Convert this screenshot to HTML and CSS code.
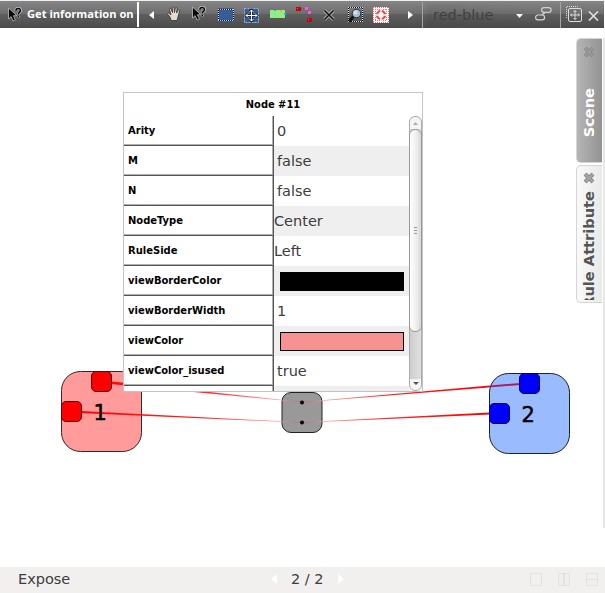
FILE: index.html
```html
<!DOCTYPE html>
<html lang="en">
<head>
<meta charset="utf-8">
<title>Node view</title>
<link rel="stylesheet" href="styles.css">
</head>
<body>
<svg width="0" height="0" class="defs">
  <defs>
    <symbol id="pointer" viewBox="0 0 16 16">
      <path d="M1.5 1v11l2.6-2.4 2 4.4 2.3-1.1-2-4.2h3.5z" fill="#050505" stroke="#bdbdbd" stroke-width=".8"/>
      <path d="M8.7 3.7C8.7.3 14 .4 13.7 3.6c0 1.8-2.3 1.8-2.3 3.8M11.4 8.7v1.7" fill="none" stroke="#b8b8b8" stroke-width="3"/>
      <path d="M8.9 3.7C8.9.8 13.5.8 13.4 3.6c0 1.8-2.1 1.8-2.1 3.7M11.3 8.8v1.5" fill="none" stroke="#080808" stroke-width="1.5"/>
    </symbol>
  </defs>
</svg>
<div class="window">
  <header class="toolbar">
    <svg class="i-pointer" width="16" height="16"><use href="#pointer"/></svg>
    <span class="mode">Get information on</span>
    <i class="rule rule-white"></i>
    <svg class="i-prev" width="5" height="8"><path d="M5 0v8L0 4z" fill="#fff"/></svg>
    <svg class="i-hand" width="14" height="16" viewBox="0 0 14 16"><path d="M4.2 14.5 3 11 .8 8.2C.3 7 1.6 6.5 2.3 7.4L4 9 2.5 3.4c-.2-1.3 1.3-1.6 1.7-.4L5.5 6.6 5.3 1.8c0-1.3 1.7-1.3 1.8 0l.4 4.7L8.3 2.200c.3-1.200 1.900-.9 1.700.3L9.600 7l1.300-2.600c.6-1.100 2-.5 1.600.7L11 11l-1 3.500z" fill="#e4dccf" stroke="#34302c" stroke-width=".8"/></svg>
    <svg class="i-query" width="16" height="16"><use href="#pointer"/></svg>
    <svg class="i-select" width="16" height="14"><path fill="#385d94" d="M0 0h16v14H0z"/><path d="M.5 1.500h15v11H.5z" fill="none" stroke="#111"/><path d="M0 1.500h16M0 12.500h16M.5 1v12M15.500 1v12" fill="none" stroke="#c5d2e2" stroke-dasharray="1 1"/></svg>
    <svg class="i-move" width="15" height="15" viewBox="0 0 15 15"><path fill="#385d94" d="M0 0h15v15H0z"/><path d="M.5.5h14v14H.5z" fill="none" stroke="#a9b6c7" stroke-dasharray="2 1"/><path d="M7.500 2v11M2 7.500h11M5.500 4l2-2 2 2M5.500 11l2 2 2-2M4 5.500l-2 2 2 2M11 5.500l2 2-2 2" fill="none" stroke="#18283d" stroke-width="2.500"/><path d="M7.500 2v11M2 7.500h11M5.500 4l2-2 2 2M5.500 11l2 2 2-2M4 5.500l-2 2 2 2M11 5.500l2 2-2 2" fill="none" stroke="#fff"/></svg>
    <svg class="i-green" width="16" height="10"><path fill="#91ed85" d="M0 1h15v8H0z"/><path fill="#ffb000" d="M10 1h2v2h-2z"/><path fill="#11b9e9" d="M4 1h2v1H4zM14 4h2v2h-2z"/></svg>
    <svg class="i-bend" width="17" height="17"><path d="M3 3h8l3 4v7" fill="none" stroke="#4f4f4f" stroke-dasharray="1 1"/><path fill="#ba0710" d="M0 1h5v4H0zM11 12h5v4h-5z"/><path fill="#ff5959" d="M1 2h1v1H1zM12 13h1v1h-1z"/><path fill="#ff55e5" d="M9 1h3v3H9zM12 5h3v3h-3z"/></svg>
    <svg class="i-delete" width="12" height="12" viewBox="0 0 12 12"><path d="M1.500 1.500 10.500 10.500M10.500 1.500 1.500 10.500" stroke="#aaa" stroke-width="3.400"/><path d="M1.500 1.500 10.500 10.500M10.500 1.500 1.500 10.500" stroke="#141414" stroke-width="1.500"/></svg>
    <svg class="i-zoom" width="17" height="16" shape-rendering="auto"><path d="M1.500.5h14v14h-14z" fill="none" stroke="#111"/><path d="M1 .5h15M1 14.500h15M1.500 0v15M15.500 0v15" fill="none" stroke="#ddd" stroke-dasharray="1 1"/><path d="M6.500 9.500 2 14.500" stroke="#111" stroke-width="3"/><circle cx="9.500" cy="6.500" r="4.300" fill="#a7bfd3" stroke="#24303a"/><circle cx="8.500" cy="5.500" r="2" fill="#d7e3ec"/></svg>
    <svg class="i-target" width="16" height="16"><path fill="#fff" d="M0 0h16v16H0z"/><path d="M0 .5h16M0 15.500h16M.5 0v16M15.500 0v16M2 2.500h12M2 13.500h12M2.500 2v12M13.500 2v12" fill="none" stroke="#f66" stroke-dasharray="1 1"/><circle cx="8" cy="8" r="4" fill="#fff" stroke="#f33" stroke-width="2.200"/><path d="M8 2v3M8 11v3M2 8h3M11 8h3" stroke="#fff" stroke-width="1.500"/></svg>
    <svg class="i-next" width="5" height="8"><path d="M0 0v8l5-4z" fill="#fff"/></svg>
    <i class="rule"></i>
    <div class="combo"><span>red-blue</span><svg width="7" height="4"><path d="M0 0h7L3.500 4z" fill="#fff"/></svg></div>
    <svg class="i-link" width="17" height="14"><g fill="none" stroke="#d2d2d2" stroke-width="1.200"><rect x="6.600" y=".6" width="9.500" height="4.800" rx="2.400"/><rect x=".6" y="8" width="9" height="4.800" rx="2.400"/><path d="M10.500 5.500 6.500 8"/></g></svg>
    <i class="rule"></i>
    <svg class="i-float" width="16" height="16"><g fill="none" stroke="#ddd"><path d="M.5 12V.5h12" stroke-dasharray="1 1"/><rect x="2.500" y="2.500" width="13" height="13" rx="1.500"/><path d="M9 4.500v9M4.500 9h9M7.500 6 9 4.500 10.500 6M7.500 12 9 13.500l1.500-1.500M6 7.500 4.500 9 6 10.500M12 7.500 13.500 9 12 10.500"/></g></svg>
    <svg class="i-close" width="11" height="10"><path d="m1 .5 9 9m0-9-9 9" stroke="#ddd" stroke-width="1.700"/></svg>
  </header>
  <main class="stage">
    <svg class="graph" width="605" height="539" viewBox="0 28 605 539">
      <defs>
        <linearGradient id="fadeL" x1="80" x2="302" gradientUnits="userSpaceOnUse"><stop offset="0" stop-color="#f00"/><stop offset=".55" stop-color="#f22"/><stop offset=".9" stop-color="#f99"/><stop offset="1" stop-color="#b55"/></linearGradient>
        <linearGradient id="fadeR" x1="302" x2="525" gradientUnits="userSpaceOnUse"><stop offset="0" stop-color="#b55"/><stop offset=".1" stop-color="#f99"/><stop offset=".4" stop-color="#f22"/><stop offset=".82" stop-color="#f00"/><stop offset=".84" stop-color="#a42060"/><stop offset="1" stop-color="#a42060"/></linearGradient>
      </defs>
      <rect x="61.500" y="371.500" width="80" height="80" rx="19" fill="#ff9b9b" stroke="#3b2525"/>
      <rect x="282" y="392.500" width="40" height="40" rx="9" fill="#999" stroke="#222"/>
      <rect x="489.500" y="373.500" width="80" height="80" rx="19" fill="#9bbbff" stroke="#18202c"/>
      <path d="M110 381.300V383.900L302 402.300V401.900zM80 411.100V413.100L302 422.700V422.200z" fill="url(#fadeL)"/>
      <path d="M302 401.900V402.400L520 385V383zM302 422.200V422.800L490 414.400V412.500z" fill="url(#fadeR)"/>
      <circle cx="302" cy="402.500" r="2"/><circle cx="302" cy="422.500" r="2"/>
      <g fill="red" stroke="#510909"><rect x="91.500" y="371.500" width="20" height="20" rx="4.500"/><rect x="61.500" y="401.500" width="20" height="20" rx="4.500"/></g>
      <g fill="#00f" stroke="#070744"><rect x="519.500" y="373.500" width="20" height="20" rx="4.500"/><rect x="489.500" y="403.500" width="20" height="20" rx="4.500"/></g>
      <g class="node-name"><text x="93.500" y="420">1</text><text x="521.500" y="421.500">2</text></g>
    </svg>
    <nav class="tabs">
      <div class="tab active"><svg width="12" height="12"><path d="m2 2 8 8m0-8-8 8" stroke="#858585" stroke-width="3.500"/><path d="m2 2 8 8m0-8-8 8" stroke="#999" stroke-width="2"/></svg><span>Scene</span></div>
      <div class="tab"><svg width="12" height="12"><path d="m2 2 8 8m0-8-8 8" stroke="#8c8c8c" stroke-width="4"/><path d="m2 2 8 8m0-8-8 8" stroke="#a5a5a5" stroke-width="2"/></svg><div class="tab-label"><span>Rule Attribute</span></div></div>
    </nav>
    <section class="info">
      <h1>Node #11</h1>
      <div class="info-body">
        <div class="rows">
          <div class="row"><b>Arity</b><span>0</span></div>
          <div class="row"><b>M</b><span>false</span></div>
          <div class="row"><b>N</b><span>false</span></div>
          <div class="row"><b>NodeType</b><span class="flush">Center</span></div>
          <div class="row"><b>RuleSide</b><span class="flush">Left</span></div>
          <div class="row"><b>viewBorderColor</b><span><i class="swatch black"></i></span></div>
          <div class="row"><b>viewBorderWidth</b><span>1</span></div>
          <div class="row"><b>viewColor</b><span><i class="swatch pink"></i></span></div>
          <div class="row"><b>viewColor_isused</b><span>true</span></div>
          <div class="row"><b></b><span></span></div>
        </div>
        <div class="scroll">
          <svg class="up" width="5" height="3"><path d="M0 3h5L2.500 0z" fill="#aaa"/></svg>
          <div class="thumb"><i></i><i></i><i></i></div>
          <svg class="down" width="6" height="3"><path d="M0 0h6L3 3z" fill="#555"/></svg>
        </div>
      </div>
    </section>
  </main>
  <footer class="status">
    <span class="expose">Expose</span>
    <svg class="page-prev" width="6" height="10"><path d="M6 0v10L0 5z" fill="#fff"/></svg>
    <span class="page">2 / 2</span>
    <svg class="page-next" width="6" height="10"><path d="M0 0v10l6-5z" fill="#fff"/></svg>
    <div class="layouts"><i></i><i class="cols"></i><i class="split"></i></div>
  </footer>
</div>
</body>
</html>
```
FILE: styles.css
```css
* { box-sizing: border-box; }
body { margin: 0; background: #fff; color: #3c3c3c; font: 14.500px "DejaVu Sans", sans-serif; overflow: hidden; }
svg { display: block; flex: none; }
.defs { position: absolute; }
.window { width: 605px; height: 593px; display: flex; flex-direction: column; }
.toolbar { height: 28px; flex: none; display: flex; align-items: center; border-top: 1px solid #edf0f0; background: linear-gradient(#858585, #6d6d6d 48%, #5e5e5e 50%, #4b4b4b); width: 604px; }
.i-pointer { margin-left: 7px; }
.mode { margin-left: 4px; width: 107px; margin-top: -2px; white-space: nowrap; font: bold 11.150px "Open Sans", sans-serif; color: #fff; }
.rule { width: 1px; height: 26px; background: #a5a5a5; flex: none; }
.rule-white { width: 2px; height: 25px; background: #fff; margin-left: 3px; }
.i-prev { margin-left: 10px; margin-top: 1px; }
.i-hand { margin-left: 13px; margin-top: -1px; }
.i-query { margin-left: 10px; margin-top: -1px; }
.i-select { margin-left: 11px; margin-top: 1px; }
.i-move { margin-left: 10px; margin-top: 2px; }
.i-green { margin-left: 11px; margin-top: -1px; }
.i-bend { margin-left: 10px; margin-top: 0; }
.i-delete { margin-left: 10px; margin-top: 1px; }
.i-zoom { margin-left: 12px; margin-top: 1px; }
.i-target { margin-left: 9px; margin-top: 1px; }
.i-next { margin-left: 19px; margin-top: 1px; }
.i-next + .rule { margin-left: 9px; }
.combo { width: 101px; height: 22px; margin-left: 4px; padding-left: 6px; display: flex; align-items: center; color: #414141; font-size: 14.500px; background: linear-gradient(90deg, #0000000d, transparent); }
.combo span { width: 83px; }
.combo svg { margin-top: 2px; }
.i-link { margin-left: 7px; margin-top: -2px; }
.i-link + .rule { margin-left: 8px; }
.i-float { margin-left: 5px; margin-top: -1px; }
.i-close { margin-left: 6px; margin-top: 2px; }
.stage { position: relative; height: 539px; flex: none; }
.graph { position: absolute; inset: 0; }
.node-name { font: 21px "DejaVu Sans", sans-serif; fill: #000; stroke: #000; stroke-width: .5px; }
.tabs { position: absolute; right: 0; top: 10px; width: 29px; height: 490px; border-right: 2px solid #e6e6e6; display: flex; flex-direction: column; gap: 2px; }
.tab { width: 26px; height: 138px; border: 1px solid #d5d5d5; border-right: 0; border-radius: 5px 0 0 5px; display: flex; flex-direction: column; align-items: center; overflow: hidden; background: linear-gradient(90deg, #fafafa, #e9e9e9); color: #555; padding: 6px 1px 0 0; }
.tab.active { height: 125px; background: linear-gradient(90deg, #b5b5b5, #939393); color: #fff; padding-top: 7px; }
.tab span { display: block; flex: none; writing-mode: vertical-rl; transform: rotate(180deg); font-weight: bold; font-size: 14.600px; line-height: 20px; white-space: nowrap; }
.tab-label { height: 109px; margin-top: 7px; flex: none; overflow: hidden; }
.tab.active span { margin-top: 30px; }
.info { position: absolute; left: 123px; top: 64px; width: 300px; height: 300px; border: 1px solid #c3c3c3; background: #fff; display: flex; flex-direction: column; overflow: hidden; }
.info h1 { margin: 0; height: 23px; flex: none; text-align: center; font: bold 11px/23px "DejaVu Sans Condensed", "DejaVu Sans", sans-serif; color: #000; }
.info-body { height: 275px; display: flex; }
.rows { width: 285px; overflow: hidden; }
.row { height: 30px; display: flex; }
.row b { width: 150px; border-right: 1px solid #555; border-bottom: 1px solid #555; box-shadow: inset -1px -1px #b0b0b0; padding-left: 4px; font: bold 11.080px/30px "DejaVu Sans Condensed", "DejaVu Sans", sans-serif; color: #000; }
.row > span { width: 135px; padding-left: 3px; line-height: 30px; }
.row:nth-child(even) > span { background: #efefef; }
.row > .flush { padding-left: 0; }
.swatch { display: block; width: 124px; height: 19px; margin: 6px 0 0 3px; border: 1px solid #000; }
.black { background: #000; }
.pink { background: #f69292; }
.scroll { width: 13px; height: 275px; border: 1px solid #aaa; border-radius: 6px; background: linear-gradient(#f5f5f4 12px, transparent 12px 262px, #f5f5f4 262px), linear-gradient(90deg, #cfcdcb, #e2e0de); display: flex; flex-direction: column; align-items: center; justify-content: space-between; padding-bottom: 5px; }
.up { margin-top: 5px; }
.thumb { width: 13px; height: 203px; margin: 4px 0 auto; border: 1px solid #999; border-radius: 6px; background: linear-gradient(90deg, #fff, #eeedeb 60%, #d9d7d5); display: flex; flex-direction: column; align-items: center; justify-content: center; gap: 2px; flex: none; }
.thumb i { width: 3px; height: 1px; background: #999; }
.status { height: 26px; background: #f1f0ee; display: flex; align-items: center; padding-bottom: 2px; }
.expose { margin-left: 18px; width: 253px; }
.page { width: 35px; margin-left: 14px; white-space: nowrap; }
.page-next { margin-left: 12px; }
.layouts { margin-left: 186px; margin-top: 0; display: flex; gap: 16px; }
.layouts i { width: 12px; height: 13px; border: 1px solid #e3e2e0; }
.layouts .cols { background: linear-gradient(90deg, transparent 4px, #e3e2e0 4px 6px, transparent 6px); }
.layouts .split { background: linear-gradient(transparent 5px, #e3e2e0 5px 6px, transparent 6px); }
```
